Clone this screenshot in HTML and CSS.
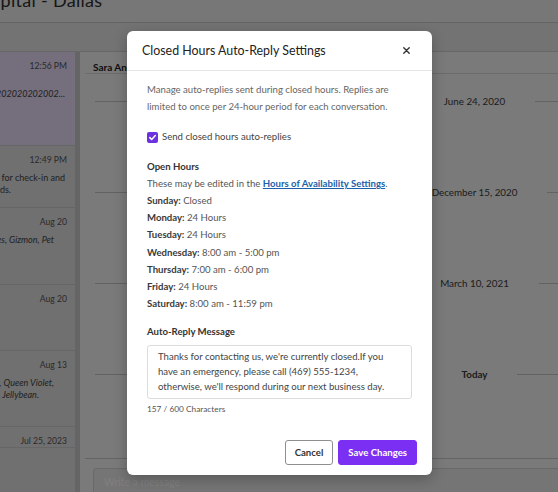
FILE: index.html
```html
<!DOCTYPE html>
<html lang="en">
<head>
<meta charset="utf-8">
<title>Closed Hours Auto-Reply Settings</title>
<link rel="stylesheet" href="styles.css">
</head>
<body>
<div class="app">
  <header class="topbar">
    <h1 class="app-title">Animal Hospital - Dallas</h1>
  </header>
  <div class="tabbar"></div>
  <div class="workspace">
    <aside class="conv-list">
      <div class="conv conv--selected conv--h94">
        <div class="conv-top"><span class="conv-name">Sara Anderson</span><span class="conv-time">12:56 PM</span></div>
        <p class="conv-preview conv-preview--first">Test message 20202020202020202020202002...</p>
      </div>
      <div class="conv conv--h62">
        <div class="conv-top"><span class="conv-name">Mike Jones</span><span class="conv-time">12:49 PM</span></div>
        <p class="conv-preview conv-preview--l1">Your pet is now ready for check-in and</p>
        <p class="conv-preview conv-preview--r11">exam, Dr. Richards.</p>
      </div>
      <div class="conv conv--h77">
        <div class="conv-top"><span class="conv-name">Linda Park</span><span class="conv-time">Aug 20</span></div>
        <p class="conv-preview conv-preview--pets conv-preview--gap conv-preview--r54">Pets: Biscuit, Hermes, Gizmon, Pet</p>
      </div>
      <div class="conv conv--h66">
        <div class="conv-top"><span class="conv-name">Tom Rivera</span><span class="conv-time">Aug 20</span></div>
      </div>
      <div class="conv conv--h76">
        <div class="conv-top"><span class="conv-name">Ana Lopez</span><span class="conv-time">Aug 13</span></div>
        <p class="conv-preview conv-preview--pets conv-preview--gap conv-preview--r55">Pets: Sir Fluffy, Queen Violet,</p>
        <p class="conv-preview conv-preview--pets conv-preview--r40">Max, Dog, Jellybean.</p>
      </div>
      <div class="conv">
        <div class="conv-top"><span class="conv-name">Chris Moore</span><span class="conv-time">Jul 25, 2023</span></div>
      </div>
    </aside>
    <div class="scroll-track"></div>
    <main class="thread">
      <div class="thread-head">Sara Anderson</div>
      <div class="messages">
        <div class="day"><div class="day-sep"><span class="rule"></span><span class="day-label">June 24, 2020</span><span class="rule"></span></div></div>
        <div class="day"><div class="day-sep"><span class="rule"></span><span class="day-label">December 15, 2020</span><span class="rule"></span></div></div>
        <div class="day"><div class="day-sep"><span class="rule"></span><span class="day-label">March 10, 2021</span><span class="rule"></span></div></div>
        <div class="day"><div class="day-sep"><span class="rule"></span><span class="day-label day-label--bold">Today</span><span class="rule"></span></div></div>
      </div>
      <div class="composer">
        <div class="composer-input">Write a message</div>
      </div>
    </main>
  </div>
</div>

<div class="backdrop"></div>

<div class="modal" role="dialog" aria-labelledby="modal-title">
  <div class="modal-header">
    <h2 class="modal-title" id="modal-title">Closed Hours Auto-Reply Settings</h2>
    <button class="modal-close" aria-label="Close">
      <svg width="7" height="7" viewBox="0 0 7 7"><path d="M0.8 0.8L6.2 6.2M6.2 0.8L0.8 6.2" stroke="#333" stroke-width="1.4" stroke-linecap="round"/></svg>
    </button>
  </div>
  <div class="modal-body">
    <p class="intro">Manage auto-replies sent during closed hours. Replies are limited to once per 24-hour period for each conversation.</p>
    <label class="check-row">
      <span class="checkbox"><svg width="9" height="9" viewBox="0 0 9 9"><path d="M1.8 4.6L3.7 6.5L7.3 2.5" fill="none" stroke="#fff" stroke-width="1.5" stroke-linecap="round" stroke-linejoin="round"/></svg></span>
      <span class="check-label">Send closed hours auto-replies</span>
    </label>
    <div class="hours">
      <div class="section-title">Open Hours</div>
      <div class="hours-note">These may be edited in the <a class="link" href="#">Hours of Availability Settings</a>.</div>
      <div class="day-row"><b>Sunday:</b> Closed</div>
      <div class="day-row"><b>Monday:</b> 24 Hours</div>
      <div class="day-row"><b>Tuesday:</b> 24 Hours</div>
      <div class="day-row"><b>Wednesday:</b> 8:00 am - 5:00 pm</div>
      <div class="day-row"><b>Thursday:</b> 7:00 am - 6:00 pm</div>
      <div class="day-row"><b>Friday:</b> 24 Hours</div>
      <div class="day-row"><b>Saturday:</b> 8:00 am - 11:59 pm</div>
    </div>
    <div class="section-title section-title--msg">Auto-Reply Message</div>
    <div class="textarea">Thanks for contacting us, we're currently closed.If you<br>have an emergency, please call (469) 555-1234,<br>otherwise, we'll respond during our next business day.</div>
    <div class="counter">157 / 600 Characters</div>
  </div>
  <div class="modal-footer">
    <button class="btn btn--secondary">Cancel</button>
    <button class="btn btn--primary">Save Changes</button>
  </div>
</div>
</body>
</html>
```
FILE: styles.css
```css
* { box-sizing: border-box; }
html, body { margin: 0; padding: 0; }
body {
  width: 558px;
  height: 492px;
  overflow: hidden;
  font-family: "Lato", "Open Sans", sans-serif;
  color: #333;
  background: #f4f4f4;
  position: relative;
}
p { margin: 0; }

/* ---------- background application ---------- */
.app {
  width: 1004px;
  margin-left: -140px;
  height: 492px;
  display: flex;
  flex-direction: column;
  background: #f4f4f4;
}
.topbar {
  height: 23px;
  background: #eeeeee;
  border-bottom: 1px solid #c9c9c9;
  overflow: hidden;
  flex-shrink: 0;
}
.app-title {
  margin: -12px 0 0 0;
  padding-left: 47px;
  font-size: 18px;
  line-height: 24px;
  font-weight: 400;
  color: #2e2e2e;
  letter-spacing: 0.3px;
}
.tabbar {
  height: 29px;
  background: #e6e6e6;
  border-bottom: 1px solid #cfcfcf;
  flex-shrink: 0;
}
.workspace {
  flex: 1;
  display: flex;
  min-height: 0;
}
.conv-list {
  width: 215px;
  background: #e0e0e0;
  overflow: hidden;
}
.conv {
  border-bottom: 1px solid #cdcdcd;
  padding: 8px 8px 0 12px;
}
.conv--selected { background: #e8ddfb; }
.conv--h94 { height: 94px; }
.conv--h62 { height: 62px; }
.conv--h77 { height: 77px; }
.conv--h66 { height: 66px; }
.conv--h76 { height: 76px; }
.conv-top {
  display: flex;
  justify-content: space-between;
  align-items: center;
  height: 12px;
}
.conv-name { font-size: 10px; font-weight: 700; color: #222; }
.conv-time { font-size: 8.6px; color: #555; }
.conv-preview {
  font-size: 9px;
  line-height: 12px;
  color: #444;
  white-space: nowrap;
  text-align: right;
  padding-right: 2px;
  overflow: hidden;
}
.conv-preview--first { margin-top: 16px; font-style: italic; }
.conv-preview--l1 { margin-top: 6px; }
.conv-preview--r11 { padding-right: 56px; }
.conv-preview--pets { font-style: italic; }
.conv-preview--gap { margin-top: 6px; }
.conv-preview--r54 { padding-right: 13px; }
.conv-preview--r55 { padding-right: 13px; }
.conv-preview--r40 { padding-right: 28px; }
.scroll-track {
  width: 5px;
  background: #cbcbcb;
}
.thread {
  flex: 1;
  display: flex;
  flex-direction: column;
  background: #f4f4f4;
  padding-left: 5px;
}
.thread-head {
  height: 29px;
  border-bottom: 1px solid #d6d6d6;
  padding: 9px 0 0 8px;
  font-size: 10px;
  font-weight: 700;
  color: #222;
}
.messages {
  flex: 1;
  padding: 20px 10px 0;
}
.day { height: 91px; }
.day-sep {
  display: flex;
  align-items: center;
  gap: 30px;
  height: 14px;
}
.rule { flex: 1; height: 1px; background: #c4c4c4; }
.day-label { font-size: 9.8px; color: #3a3a3a; }
.day-label--bold { font-weight: 700; }
.composer {
  height: 36px;
  border-top: 1px solid #c8c8c8;
  padding: 9px 0 0 8px;
}
.composer-input {
  height: 40px;
  border: 1px solid #d2d2d2;
  border-radius: 3px;
  background: #eaeaea;
  padding: 7px 10px;
  font-size: 10.5px;
  color: #ffffff;
}

.backdrop {
  position: absolute;
  inset: 0;
  background: rgba(0, 0, 0, 0.5);
}

/* ---------- modal ---------- */
.modal {
  position: absolute;
  left: 127px;
  top: 31px;
  width: 305px;
  height: 444px;
  background: #fff;
  border-radius: 6px;
  box-shadow: 0 4px 14px rgba(0, 0, 0, 0.25);
  display: flex;
  flex-direction: column;
}
.modal-header {
  flex-shrink: 0;
  height: 40px;
  display: flex;
  align-items: center;
  justify-content: space-between;
  padding: 0 20px 0 15px;
  border-bottom: 1px solid #e6e6e6;
}
.modal-title {
  margin: 0;
  font-size: 12.4px;
  font-weight: 400;
  color: #222;
}
.modal-close {
  border: 0;
  background: none;
  padding: 2px;
  display: flex;
  cursor: pointer;
}
.modal-body {
  flex-shrink: 0;
  padding: 10px 20px 0 20px;
  font-size: 9.6px;
  line-height: 17.2px;
  color: #555;
}
.intro { color: #666; }
.check-row {
  display: flex;
  align-items: center;
  gap: 4px;
  margin-top: 13px;
  color: #444;
}
.checkbox {
  width: 11px;
  height: 11px;
  border-radius: 2px;
  background: #6d31e0;
  display: flex;
  align-items: center;
  justify-content: center;
}
.hours { margin-top: 12px; }
.section-title { font-weight: 700; color: #333; }
.section-title--msg { margin-top: 11px; }
.day-row b { font-weight: 700; color: #3a3a3a; }
.link { color: #1d5fa8; font-weight: 700; text-decoration: underline; }
.textarea {
  margin-top: 4px;
  height: 54px;
  border: 1px solid #dcdcdc;
  border-radius: 3px;
  padding: 3px 10px;
  line-height: 15px;
  color: #444;
  white-space: nowrap;
  overflow: hidden;
}
.counter {
  margin-top: 4px;
  font-size: 8.3px;
  line-height: 12px;
  color: #555;
}
.modal-footer {
  margin-top: auto;
  display: flex;
  justify-content: flex-end;
  gap: 5px;
  padding: 0 15px 10px;
}
.btn {
  height: 25px;
  border-radius: 3px;
  font-family: inherit;
  font-size: 9.6px;
  font-weight: 700;
  padding: 0 9px;
  cursor: pointer;
}
.btn--secondary {
  background: #fff;
  border: 1px solid #8f8f8f;
  color: #333;
}
.btn--primary {
  background: #7b2ff2;
  border: 1px solid #7b2ff2;
  color: #fff;
}
```
